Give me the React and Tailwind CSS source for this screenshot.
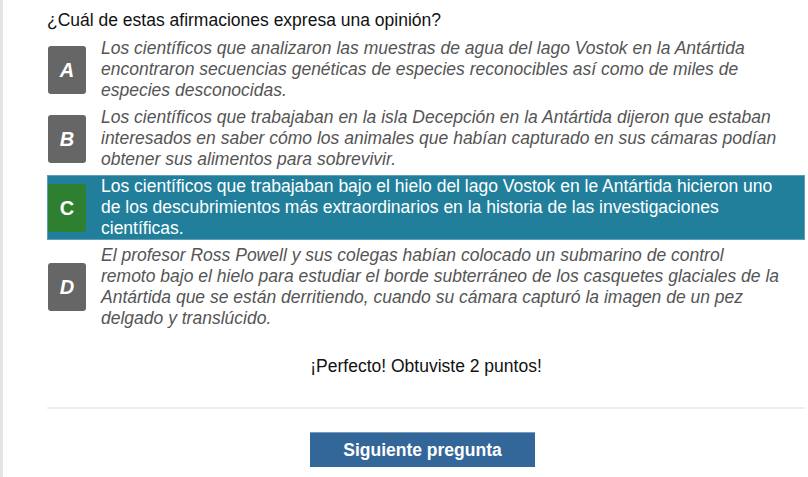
import React from "react";

const options = [
  {
    letter: "A",
    text: "Los científicos que analizaron las muestras de agua del lago Vostok en la Antártida encontraron secuencias genéticas de especies reconocibles así como de miles de especies desconocidas.",
  },
  {
    letter: "B",
    text: "Los científicos que trabajaban en la isla Decepción en la Antártida dijeron que estaban interesados en saber cómo los animales que habían capturado en sus cámaras podían obtener sus alimentos para sobrevivir.",
  },
  {
    letter: "C",
    selected: true,
    text: "Los científicos que trabajaban bajo el hielo del lago Vostok en le Antártida hicieron uno de los descubrimientos más extraordinarios en la historia de las investigaciones científicas.",
  },
  {
    letter: "D",
    text: "El profesor Ross Powell y sus colegas habían colocado un submarino de control remoto bajo el hielo para estudiar el borde subterráneo de los casquetes glaciales de la Antártida que se están derritiendo, cuando su cámara capturó la imagen de un pez delgado y translúcido.",
  },
];

function Option({ letter, text, selected }) {
  return (
    <div
      className={
        "flex items-center border " +
        (selected ? "bg-[#217f9c] border-[#5c9fb6]" : "border-transparent")
      }
    >
      <div
        className={
          "w-[38px] h-[48px] shrink-0 rounded-[3px] flex items-center justify-center text-white font-bold text-[20px] " +
          (selected ? "bg-[#2f7f31]" : "bg-[#666666] italic")
        }
      >
        {letter}
      </div>
      <div
        className={
          "ml-[15px] w-[681px] text-[17.5px] leading-[21px] " +
          (selected ? "text-white" : "text-[#555555] italic")
        }
      >
        {text}
      </div>
    </div>
  );
}

export default function App() {
  return (
    <div
      className="min-h-[477px] w-[808px] bg-white border-l-[3px] border-[#e4e4e4] pl-[44px] pr-[3px] pt-[10px]"
      style={{ fontFamily: '"Liberation Sans", Arial, sans-serif' }}
    >
      <div className="text-[17.5px] leading-[21px] text-[#111111]">
        ¿Cuál de estas afirmaciones expresa una opinión?
      </div>
      <div className="mt-[6px] flex flex-col gap-[4px]">
        {options.map((o) => (
          <Option key={o.letter} {...o} />
        ))}
      </div>
      <div className="mt-[26px] text-center text-[17.5px] leading-[21px] text-[#111111]">
        ¡Perfecto! Obtuviste 2 puntos!
      </div>
      <div className="mt-[30px] h-[2px] bg-[#eeeeee]" />
      <div className="mt-[23px] flex justify-center pr-[7px]">
        <button className="w-[225px] h-[35px] bg-[#336699] border-t border-[#7a9cc0] text-white font-bold text-[17.5px]">
          Siguiente pregunta
        </button>
      </div>
    </div>
  );
}
